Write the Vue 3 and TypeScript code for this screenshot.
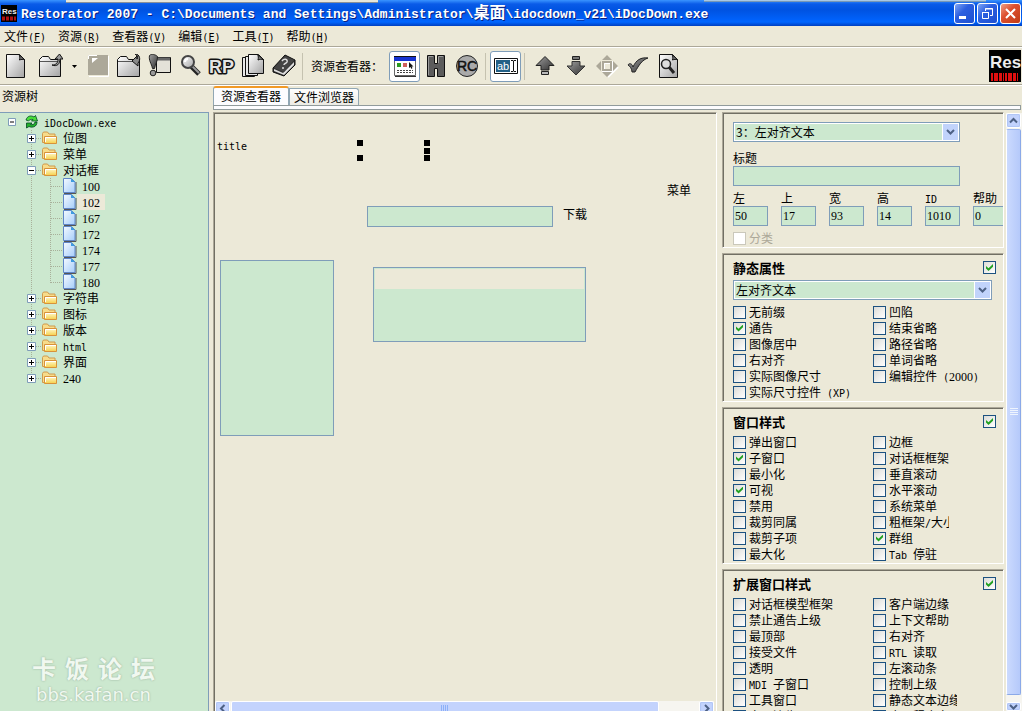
<script setup lang="ts">
import { h, ref, type FunctionalComponent } from 'vue'

/* Splits a label into Latin and CJK runs so that Latin keeps a half-width pitch. */
const Txt: FunctionalComponent<{ t: string }> = (props) =>
  (props.t.match(/[\x20-\x7e]+|[^\x20-\x7e]+/g) ?? []).flatMap((run) =>
    /^[\x20-\x7e]/.test(run)
      ? (run.match(/\d+|\D+/g) ?? []).map((p) => h('span', { class: /\d/.test(p) ? 'num' : 'lat' }, p))
      : [h('span', run)],
  )
Txt.props = ['t']

interface Menu { name: string; key: string }
const menus: Menu[] = [
  { name: '文件', key: 'F' },
  { name: '资源', key: 'R' },
  { name: '查看器', key: 'V' },
  { name: '编辑', key: 'E' },
  { name: '工具', key: 'T' },
  { name: '帮助', key: 'H' },
]

interface Node { label: string; leaf?: boolean; open?: boolean; last?: boolean; selected?: boolean }
const nodes: Node[] = [
  { label: '位图' },
  { label: '菜单' },
  { label: '对话框', open: true },
  { label: '100', leaf: true },
  { label: '102', leaf: true, selected: true },
  { label: '167', leaf: true },
  { label: '172', leaf: true },
  { label: '174', leaf: true },
  { label: '177', leaf: true },
  { label: '180', leaf: true, last: true },
  { label: '字符串' },
  { label: '图标' },
  { label: '版本' },
  { label: 'html' },
  { label: '界面' },
  { label: '240', last: true },
]

interface Field { label: string; value: string }
const fields = ref<Field[]>([
  { label: '左', value: '50' },
  { label: '上', value: '17' },
  { label: '宽', value: '93' },
  { label: '高', value: '14' },
  { label: 'ID', value: '1010' },
  { label: '帮助 ID', value: '0' },
])

interface Option { label: string; on: boolean }
interface Group { title: string; combo?: string; left: Option[]; right: Option[] }
const opts = (names: string[], on: string[] = []): Option[] =>
  names.map((label) => ({ label, on: on.includes(label) }))

const groups = ref<Group[]>([
  {
    title: '静态属性',
    combo: '左对齐文本',
    left: opts(['无前缀', '通告', '图像居中', '右对齐', '实际图像尺寸', '实际尺寸控件 (XP)'], ['通告']),
    right: opts(['凹陷', '结束省略', '路径省略', '单词省略', '编辑控件 (2000)']),
  },
  {
    title: '窗口样式',
    left: opts(['弹出窗口', '子窗口', '最小化', '可视', '禁用', '裁剪同属', '裁剪子项', '最大化'], ['子窗口', '可视']),
    right: opts(['边框', '对话框框架', '垂直滚动', '水平滚动', '系统菜单', '粗框架/大小', '群组', 'Tab 停驻'], ['群组']),
  },
  {
    title: '扩展窗口样式',
    left: opts(['对话框模型框架', '禁止通告上级', '最顶部', '接受文件', '透明', 'MDI 子窗口', '工具窗口', '窗口边缘']),
    right: opts(['客户端边缘', '上下文帮助', '右对齐', 'RTL 读取', '左滚动条', '控制上级', '静态文本边缘', '应用程序窗口']),
  },
])
</script>

<template>
  <div class="window">
    <svg class="defs" width="0" height="0" aria-hidden="true">
      <defs>
        <linearGradient id="metal" x1="0" y1="0" x2="1" y2="1">
          <stop offset="0" stop-color="#ffffff" /><stop offset="1" stop-color="#a4a4a4" />
        </linearGradient>
        <linearGradient id="dark" x1="0" y1="0" x2="1" y2="1">
          <stop offset="0" stop-color="#a0a0a0" /><stop offset="1" stop-color="#303030" />
        </linearGradient>
        <linearGradient id="gold" x1="0" y1="0" x2="0" y2="1">
          <stop offset="0" stop-color="#fffbd0" /><stop offset="1" stop-color="#f6cf4a" />
        </linearGradient>
        <linearGradient id="sheet" x1="0" y1="0" x2="1" y2="1">
          <stop offset="0" stop-color="#f4faff" /><stop offset="1" stop-color="#a6cdfa" />
        </linearGradient>
      </defs>
    </svg>

    <header class="titlebar">
      <svg class="appicon" width="16" height="17" viewBox="0 0 16 17">
        <rect width="16" height="17" fill="#000" />
        <text x="1" y="9" font-family="Liberation Sans" font-weight="bold" font-size="8" fill="#eee">Res</text>
        <path d="M1 13.5h14" stroke="#b01010" stroke-width="4" stroke-dasharray="3 1" />
      </svg>
      <h1>Restorator 2007 - C:\Documents and Settings\Administrator\<span class="cjk">桌面</span>\idocdown_v21\iDocDown.exe</h1>
      <button class="cap" aria-label="Minimize"><svg width="19" height="19"><path d="M4 13.500h7" stroke="#fff" stroke-width="3" /></svg></button>
      <button class="cap" aria-label="Restore">
        <svg width="19" height="19" fill="none" stroke="#fff"><path d="M7.500 7V4.500h7v7H12M7 5h8" /><path d="M4.500 8.500h6v6h-6zM4 8.500h7" /></svg>
      </button>
      <button class="cap close" aria-label="Close"><svg width="19" height="19"><path d="M5 5l9 9M14 5l-9 9" stroke="#fff" stroke-width="2" /></svg></button>
    </header>

    <nav class="menubar">
      <button v-for="m in menus" :key="m.key"><span>{{ m.name }}</span><span class="lat">(<u>{{ m.key }}</u>)</span></button>
    </nav>

    <div class="toolbar">
      <button class="tool first" aria-label="New">
        <svg width="24" height="24"><path d="M2.500.5h13l5 5v18h-18z" fill="url(#metal)" stroke="#111" /><path d="M15 .5c1 2 1 3 .5 5.500 2-.8 3-.8 5-.3z" fill="#777" stroke="#111" /></svg>
      </button>
      <button class="tool" aria-label="Open">
        <svg width="24" height="24"><path d="M.5 22.500v-17l3-3h6l2 3h10v17z" fill="url(#metal)" stroke="#111" /><path d="M1 7.500h20" stroke="#555" /><path d="M13 11c4 0 6-2 6-6h-3l4.500-5L24 5h-3c0 5-3 8-8 6z" fill="#999" stroke="#111" /></svg>
      </button>
      <button class="drop" aria-label="Recent files"><svg width="5" height="3"><path d="M0 0h5L2.500 3z" /></svg></button>
      <button class="tool" aria-label="Save" disabled>
        <svg width="24" height="24"><path d="M3 22.500h19.500V2" fill="none" stroke="#fff" /><path d="M2 1h20v20H2z" fill="#aca899" /><path d="M2.500 5V1.500H11" fill="none" stroke="#fff" /><path d="M6 4h6L6 9z" fill="#fff" /></svg>
      </button>
      <button class="tool" aria-label="Import">
        <svg width="24" height="24"><path d="M.5 22.500v-17l3-3h6l2 3h11v17z" fill="url(#metal)" stroke="#111" /><path d="M1 7.500h21" stroke="#555" /><path d="M18 0c5 0 6 6 3 9v3l-6-5 5-5v3c1-2 0-4-2-5z" fill="#888" stroke="#111" /></svg>
      </button>
      <button class="tool" aria-label="Run">
        <svg width="24" height="24"><path d="M8.500 18.500v-15h14v15z" fill="#e4e2d8" stroke="#111" /><path d="M9 5h13" stroke="#666" stroke-width="3" /><path d="M1.500 1.500c2-2 6-1 8 1 0 5-2 7-3 12h-2c-1-5-4-8-3-13z" fill="url(#dark)" stroke="#222" /><circle cx="5" cy="19" r="2.800" fill="#999" stroke="#222" /></svg>
      </button>
      <button class="tool" aria-label="Search">
        <svg width="24" height="24"><path d="M12 12l8 8" stroke="#222" stroke-width="5" /><path d="M13 12l7 7" stroke="#999" stroke-width="2" /><circle cx="9" cy="8" r="6" fill="url(#metal)" stroke="#444" stroke-width="2" /><path d="M6 8c0-2 1-3 3-3" stroke="#fff" stroke-width="2" fill="none" /></svg>
      </button>
      <button class="tool" aria-label="ResPatcher">
        <svg width="28" height="24"><text x="1" y="19" font-family="Liberation Sans" font-weight="bold" font-size="18" fill="#e4e4e4" stroke="#111" stroke-width="3" stroke-linejoin="round" paint-order="stroke">RP</text></svg>
      </button>
      <button class="tool" aria-label="Copy">
        <svg width="24" height="24"><g fill="#e8e8e8" stroke="#111"><path d="M1.500 3.500h12v19h-12z" /><path d="M4.500 2.500h12v19h-12z" /><path d="M7.500.5h10l5 5v14h-15z" fill="url(#metal)" /></g><path d="M16.500.5c1 2 1 3 .5 5.500 2-.8 3-.8 5.500-.5z" fill="#777" stroke="#111" /></svg>
      </button>
      <button class="tool" aria-label="Help">
        <svg width="24" height="24"><path d="M1 14L13 1l10 5v5L12 22 1 18z" fill="#333" stroke="#111" /><path d="M2 15l9 4L22 8v3L12 21 2 17z" fill="#ddd" /><path d="M2 14L13 2l9 4-10 12z" fill="#444" /><path d="M10 7c2-3 6-2 5 1-1 2-3 1-3 3M11 13v2" stroke="#ddd" stroke-width="1.500" fill="none" /></svg>
      </button>
      <i class="sep" />
      <span class="toollabel">资源查看器：</span>
      <button class="tool on" aria-label="Dialog view" aria-pressed="true">
        <svg width="24" height="24"><path d="M1.500 3.500h21v18h-21z" fill="#fff" stroke="#666" /><path d="M1 5h22" stroke="#1634d0" stroke-width="4" /><path d="M1 2.500h22" stroke="#111" /><path d="M4 9h4v4H4z" fill="#2a9a20" /><path d="M10 9h4v4h-4z" fill="#d0605a" /><path d="M16 8v6l1.500-1 1 2 1-1-1-1.500h2z" fill="#111" /><path d="M4 16.500h16M4 18.500h16" stroke="#444" stroke-dasharray="2 1" /><path d="M2 22.500h21" stroke="#333" /></svg>
      </button>
      <button class="tool" aria-label="Hex view">
        <svg width="24" height="24"><path d="M3.500 1.500h7v8h3v-8h7v21h-7v-8h-3v8h-7z" fill="#5c5c5c" stroke="#111" /><path d="M4.500 21V2.500H9M14.500 9V2.500H19" stroke="#999" fill="none" /></svg>
      </button>
      <button class="tool" aria-label="RC view">
        <svg width="24" height="24"><circle cx="12" cy="12" r="10.500" fill="#aaa" stroke="#222" /><text x="2" y="17" font-family="Liberation Sans" font-size="14" fill="#111" stroke="#111" stroke-width=".5">RC</text></svg>
      </button>
      <i class="sep" />
      <button class="tool on" aria-label="Edit mode" aria-pressed="true">
        <svg width="24" height="24"><path d="M.5 4.500h23v15H.5z" fill="#fff" stroke="#111" /><path d="M2 6h14v12H2z" fill="#236086" /><text x="3" y="16" font-family="Liberation Sans" font-size="11" fill="#fff">ab</text><path d="M17 6.500h2l.5.500.5-.5h2M17 17.500h2l.5-.5.5.5h2M19.500 7v10" stroke="#111" fill="none" /></svg>
      </button>
      <i class="sep" />
      <button class="tool" aria-label="Move up">
        <svg width="24" height="24"><path d="M12 2.500l9 9h-5v4.500H8v-4.500H3z" fill="url(#dark)" stroke="#222" /><path d="M8.500 17.500h7v3h-7z" fill="#bbb" stroke="#222" /></svg>
      </button>
      <button class="tool" aria-label="Move down">
        <svg width="24" height="24"><path d="M12 21l9-9h-5V7.500H8V12H3z" fill="url(#dark)" stroke="#333" /><path d="M8.500 2.500h7v3h-7z" fill="#777" stroke="#222" /></svg>
      </button>
      <button class="tool" aria-label="Arrange" disabled>
        <svg width="24" height="24"><path d="M13 23l10-10" stroke="#fff" stroke-width="2" /><path d="M12 1l5 5H7zM12 23l5-5H7zM1 12l5-5v10zM23 12l-5-5v10z" fill="#aca899" /><path d="M8 8h8v8H8z" fill="#ece9d8" stroke="#aca899" stroke-width="2" /><path d="M9.500 15V9.500H15M17.500 7v10.500H7" fill="none" stroke="#fff" /></svg>
      </button>
      <button class="tool" aria-label="Apply">
        <svg width="24" height="24"><path d="M2 11c1-2 4-2 5 2C10 6 15 3 22 4c-6 2-9 7-13 14H6C6 15 4 12 2 11z" fill="url(#dark)" stroke="#222" /></svg>
      </button>
      <button class="tool" aria-label="Preview">
        <svg width="24" height="24"><path d="M2.500.5h13l5 5v18h-18z" fill="url(#metal)" stroke="#111" /><path d="M15 .5c1 2 1 3 .5 5.500 2-.8 3-.8 5-.3z" fill="#777" stroke="#111" /><path d="M12 13l5 6" stroke="#222" stroke-width="3" /><circle cx="9" cy="10" r="4.500" fill="#ddd" stroke="#222" stroke-width="1.500" /></svg>
      </button>
      <svg class="logo" width="32" height="32">
        <rect width="32" height="32" fill="#000" />
        <text x="1" y="18" font-family="Liberation Sans" font-weight="bold" font-size="17" fill="#eee">Res</text>
        <path d="M2 27h28" stroke="#e01010" stroke-width="8" stroke-dasharray="2 1 4 1 3 1 1 1" />
      </svg>
    </div>

    <main class="body">
      <aside class="side">
        <h2>资源树</h2>
        <div class="tree">
          <ul>
            <li>
              <svg class="guide" width="25" height="16"><path d="M8.500 4.500h7v7h-7z" fill="#fff" stroke="#7f9db9" /><path d="M10 8h4" stroke="#000" /></svg>
              <svg width="15" height="16"><g stroke="#042" stroke-width=".8"><path d="M1 6c1-4 5-5 8-3l1.500-1.500L12.500 7H6.500l1.500-1.500C6 5 4 6 3.500 7z" fill="#4ade3a" /><path d="M12 8c0 5-5 6-8 4.500L1.500 14V9H7l-1.500 1.500c2 .5 4 0 4.500-2.500z" fill="#22b02a" /></g></svg>
              <span class="label root"><Txt t="iDocDown.exe" /></span>
            </li>
            <li v-for="n in nodes" :key="n.label">
              <svg v-if="n.leaf" class="guide" width="62" height="16" fill="none">
                <path d="M31.500 0v16" stroke="#a8b09a" stroke-dasharray="1 1" />
                <path :d="n.last ? 'M50.500 0v9M51 8.500h11' : 'M50.500 0v16M51 8.500h11'" stroke="#a8b09a" stroke-dasharray="1 1" />
              </svg>
              <svg v-else class="guide" width="42" height="16" fill="none">
                <path :d="n.last ? 'M31.500 0v8' : 'M31.500 0v16'" stroke="#a8b09a" stroke-dasharray="1 1" />
                <path d="M36 8.500h6" stroke="#a8b09a" stroke-dasharray="1 1" />
                <path d="M27.500 4.500h8v8h-8z" fill="#fff" stroke="#7f9db9" />
                <path :d="n.open ? 'M29 8.500h5' : 'M29 8.500h5M31.500 6v5'" stroke="#000" />
              </svg>
              <svg v-if="n.leaf" width="15" height="16"><path d="M2 15.500h12V4" fill="none" stroke="#555" /><path d="M1.500.5h8l3.500 3.500v10.500H1.500z" fill="url(#sheet)" stroke="#5f86c8" /><path d="M9 .5V4h4z" fill="#3c9be0" /></svg>
              <svg v-else width="16" height="16"><path d="M.5 12.500V3.500l1-1.500h4l1.500 2h6v9z" fill="#f7dc8a" stroke="#d09a4c" /><path d="M2.500 13.500V6.500h12v7z" fill="url(#gold)" stroke="#d8923a" /><path d="M3.500 12V7.500H14" stroke="#fff" fill="none" /></svg>
              <span class="label" :class="{ selected: n.selected }"><Txt :t="n.label" /></span>
            </li>
          </ul>
          <div class="mark">
            <p class="big"><span>卡</span><span>饭</span><span>论</span><span>坛</span></p>
            <p class="small">bbs.kafan.cn</p>
          </div>
        </div>
      </aside>

      <section class="work">
        <div class="tabs">
          <button class="tab active">资源查看器</button>
          <button class="tab">文件浏览器</button>
        </div>
        <div class="strip" />
        <div class="panes">
          <div class="viewer">
            <div class="canvas">
              <span class="item title"><Txt t="title" /></span>
              <i class="handle h1" /><i class="handle h2" /><i class="handle h3" /><i class="handle h4" /><i class="handle h5" />
              <span class="item menu">菜单</span>
              <input class="item edit" aria-label="编辑框" />
              <span class="item down">下载</span>
              <div class="item list" />
              <div class="item grid"><div class="gridhead" /></div>
            </div>
            <div class="hbar">
              <button class="sb" aria-label="Left"><svg width="9" height="9"><path d="M6.500 1L3 4.500 6.500 8" fill="none" stroke="#4d6185" stroke-width="2" /></svg></button>
              <div class="thumb"><svg width="8" height="8"><path d="M.5 0v8M2.500 0v8M4.500 0v8M6.500 0v8" stroke="#8cb0f8" /></svg></div>
              <div class="track" />
              <button class="sb" aria-label="Right"><svg width="9" height="9"><path d="M3 1l3.500 3.500L3 8" fill="none" stroke="#4d6185" stroke-width="2" /></svg></button>
            </div>
          </div>

          <div class="props">
            <section class="panel">
              <div class="combo short">
                <select aria-label="控件"><option>3：左对齐文本</option></select>
                <span class="arrow"><svg width="9" height="7"><path d="M1 1l3.500 3.500L8 1" fill="none" stroke="#4d6185" stroke-width="2" /></svg></span>
              </div>
              <label class="cap-label" for="caption">标题</label>
              <input id="caption" class="box" />
              <div class="fields">
                <label v-for="f in fields" :key="f.label" class="field"><span class="fname"><Txt :t="f.label" /></span><input v-model="f.value" class="box" /></label>
              </div>
              <label class="check off"><input type="checkbox" disabled /><span>分类</span></label>
            </section>

            <section v-for="(g, i) in groups" :key="g.title" class="panel">
              <div class="head">
                <h3 :id="'group' + i">{{ g.title }}</h3>
                <input type="checkbox" checked :aria-labelledby="'group' + i" />
              </div>
              <div v-if="g.combo" class="combo">
                <select :aria-labelledby="'group' + i"><option>{{ g.combo }}</option></select>
                <span class="arrow"><svg width="9" height="7"><path d="M1 1l3.500 3.500L8 1" fill="none" stroke="#4d6185" stroke-width="2" /></svg></span>
              </div>
              <div class="cols">
                <div><label v-for="o in g.left" :key="o.label" class="check"><input v-model="o.on" type="checkbox" /><span><Txt :t="o.label" /></span></label></div>
                <div><label v-for="o in g.right" :key="o.label" class="check"><input v-model="o.on" type="checkbox" /><span :class="{ clip: o.label === '粗框架/大小', edge: o.label === '静态文本边缘' }"><Txt :t="o.label" /></span></label></div>
              </div>
            </section>
          </div>

          <div class="vbar">
            <button class="sb" aria-label="Up"><svg width="9" height="9"><path d="M1 6.500L4.500 3 8 6.500" fill="none" stroke="#4d6185" stroke-width="2" /></svg></button>
            <div class="thumb"><svg width="8" height="8"><path d="M0 .5h8M0 2.500h8M0 4.500h8M0 6.500h8" stroke="#eef4fe" /></svg></div>
            <div class="track" />
            <button class="sb" aria-label="Down"><svg width="9" height="9"><path d="M1 3l3.500 3.500L8 3" fill="none" stroke="#4d6185" stroke-width="2" /></svg></button>
          </div>
        </div>
      </section>
    </main>
  </div>
</template>

<style>
html, body { margin: 0; overflow: hidden; }
.lat { font-family: "DejaVu Sans Mono", monospace; font-size: 10px; line-height: 1; }
.num { font-family: "Liberation Serif", serif; font-size: 12px; line-height: 1; }
</style>

<style scoped>
.window {
  display: flex;
  flex-direction: column;
  height: 100vh;
  overflow: hidden;
  background: #ece9d8;
  color: #000;
  font: 12px/16px "Noto Sans CJK SC", sans-serif;
  white-space: pre;
}
.defs { position: absolute; }
h1, h2, h3, p, ul { margin: 0; padding: 0; font-size: 12px; font-weight: normal; list-style: none; }
button, input, select { box-sizing: border-box; margin: 0; padding: 0; font: inherit; color: inherit; border-radius: 0; }
button { border: 0; background: none; }
svg { display: block; flex: none; }

.titlebar {
  display: flex;
  align-items: center;
  gap: 2px;
  flex: none;
  box-sizing: border-box;
  height: 26px;
  padding: 0 1px;
  background:
    linear-gradient(#e8e6da 0 2px, #8a8f98 2px 3px) 66px 0 / 312px 3px no-repeat,
    linear-gradient(#bfe0fb, #5f7f9f) 704px 0 / 282px 2px no-repeat,
    linear-gradient(#3a94ff 0, #0a5be8 4px, #0053e1 10px, #0062fb 20px, #0066ff 22px, #003fc0 26px);
}
h1 {
  flex: 1;
  min-width: 0;
  overflow: hidden;
  padding-left: 2px;
  color: #fff;
  font: bold 13px/20px "Liberation Mono", monospace;
  text-shadow: 1px 1px 0 #0a1f80;
}
.cjk { font: bold 16px/20px "Noto Sans CJK SC", sans-serif; }
.cap {
  display: flex;
  flex: none;
  width: 21px;
  height: 21px;
  border: 1px solid #fff;
  border-radius: 3px;
  background: linear-gradient(135deg, #7fa5f5, #2c5fe0 40%, #1d4fd0);
}
.close { background: linear-gradient(135deg, #f0a088, #dd5030 40%, #c03a14); }

.menubar {
  display: flex;
  gap: 12px;
  flex: none;
  height: 20px;
  padding-left: 4px;
  border-bottom: 1px solid #aca899;
  box-shadow: 0 1px 0 #fff;
}
.menubar button { height: 20px; line-height: 18px; }

.toolbar {
  display: flex;
  align-items: center;
  flex: none;
  height: 36px;
  margin-top: 1px;
  border-bottom: 1px solid #aca899;
  box-shadow: 0 1px 0 #fff;
}
.tool { display: flex; align-items: center; justify-content: center; flex: none; width: 31px; height: 31px; }
.first { margin-right: 4px; }
.drop { display: flex; justify-content: center; width: 16px; }
.on { border: 1px solid #7f9db9; border-radius: 3px; background: #fff; }
.sep { flex: none; width: 1px; height: 27px; margin: 0 4px 0 3px; background: #c5c2b0; }
.toollabel { width: 78px; padding-left: 4px; }
.logo { margin-left: auto; margin-right: 1px; }

.body { display: grid; grid-template-columns: 209px minmax(0, 1fr); gap: 4px; flex: 1; min-height: 0; padding-top: 1px; }
.side { display: flex; flex-direction: column; min-height: 0; }
h2 { height: 26px; padding-left: 2px; line-height: 20px; }
.tree {
  display: flex;
  flex-direction: column;
  flex: 1;
  min-height: 0;
  border: 1px solid #7f9db9;
  border-width: 1px 1px 0 0;
  background: #cce8cf;
}
li { display: flex; height: 16px; }
.tree ul { padding-top: 1px; }
.label { padding: 0 5px; line-height: 15px; }
.root { padding-left: 4px; }
.selected { background: #ece9d8; }
.mark { margin-top: auto; padding: 0 0 6px 32px; color: #f0f8f0; text-shadow: 0 0 2px #8fa893; }
.big { display: flex; gap: 9px; font: 24px/28px "Liberation Sans", "Noto Sans CJK SC", sans-serif; font-weight: bold; }
.small { padding-left: 4px; font: 18px/21px "DejaVu Sans", sans-serif; }

.work { display: flex; flex-direction: column; min-width: 0; min-height: 0; }
.tabs { display: flex; align-items: flex-end; height: 19px; }
.tab { height: 17px; padding: 0 4px; border: 1px solid #91a7b4; border-bottom: 0; border-radius: 0 3px 0 0; background: linear-gradient(#fff, #ecebe4); }
.tab.active { height: 19px; padding: 0 7px 2px; border-top: 2px solid #f29a26; border-radius: 3px 3px 0 0; background: #fcfcfe; }
.strip { flex: none; height: 3px; margin: 0 1px 2px 0; border: 1px solid #919b9c; background: #fcfcfe; }
.panes { display: flex; flex: 1; min-height: 0; }

.viewer {
  display: flex;
  flex-direction: column;
  flex: 1;
  min-width: 0;
  margin-right: 5px;
  border: 1px solid #aca899;
  border-right-color: #fff;
  border-bottom: 0;
  box-shadow: inset 1px 1px 0 #716f64;
}
.canvas { position: relative; flex: 1; min-height: 0; overflow: hidden; }
.item { position: absolute; box-sizing: border-box; }
.title { left: 3px; top: 24px; }
.menu { left: 453px; top: 69px; }
.down { left: 349px; top: 93px; }
.edit, .list, .grid { border: 1px solid #7f9db9; background: #cce8cf; }
.edit { left: 153px; top: 93px; width: 186px; height: 21px; }
.list { left: 6px; top: 147px; width: 114px; height: 176px; }
.grid { left: 159px; top: 154px; width: 213px; height: 75px; padding: 1px; }
.gridhead { height: 20px; background: #ece9d8; }
.handle { position: absolute; width: 6px; height: 6px; background: #000; }
.h1 { left: 143px; top: 27px; }
.h2 { left: 143px; top: 42px; }
.h3 { left: 210px; top: 27px; }
.h4 { left: 210px; top: 35px; }
.h5 { left: 210px; top: 42px; }

.hbar { display: flex; gap: 1px; flex: none; height: 10px; margin: 0 2px 0 1px; overflow: hidden; background: #f6f5f0; }
.sb, .thumb { display: flex; align-items: center; justify-content: center; flex: none; box-sizing: border-box; border: 1px solid #fff; border-radius: 2px; background: #c3d3fd; }
.sb { width: 15px; height: 15px; box-shadow: inset 0 0 1px 1px #b0c5f6; }
.hbar .thumb { flex: 430; height: 16px; }
.hbar .track { flex: 38; }
.vbar { display: flex; flex-direction: column; gap: 1px; flex: none; width: 15px; margin: 1px 0 0 2px; padding-right: 1px; background: #f6f5f0; }
.vbar .thumb { flex: 1; border-color: #9db8f0 #8ba9e8 #8ba9e8 #fff; background: linear-gradient(90deg, #cbdafe, #b5c9fa); }
.vbar .track { flex: none; height: 5px; }
.vbar .sb:last-child { height: 9px; }

.props { display: flex; flex-direction: column; gap: 5px; flex: none; width: 282px; overflow: hidden; }
.panel {
  flex: none;
  box-sizing: border-box;
  padding: 9px 0 1px 10px;
  overflow: hidden;
  border: 1px solid #aca899;
  border-right-color: #fff;
  border-bottom-color: #fff;
  box-shadow: inset 1px 1px 0 #716f64;
}
.combo { position: relative; height: 20px; margin-right: 11px; }
.combo.short { margin-right: 43px; }
.combo select { display: block; width: 100%; height: 20px; padding-left: 2px; border: 1px solid #7f9db9; background: #cce8cf; appearance: none; box-shadow: inset 0 0 0 1px #fff; }
.arrow { position: absolute; top: 2px; right: 2px; display: flex; align-items: center; justify-content: center; width: 15px; height: 16px; border-left: 1px solid #fff; background: #c1d3fb; pointer-events: none; }
.cap-label { display: block; margin-top: 8px; }
.box { display: block; height: 20px; border: 1px solid #7f9db9; background: #cce8cf; }
#caption { width: 227px; }
.fields { display: flex; gap: 13px; margin-top: 4px; }
.field { flex: none; width: 35px; }
.fname { display: block; height: 16px; }
.field .box { width: 35px; padding-left: 1px; font: 12px/16px "Liberation Serif", serif; }
.check { display: flex; align-items: center; gap: 3px; height: 16px; }
.off { margin-top: 4px; color: #aca899; }
input[type="checkbox"] {
  display: grid;
  place-content: center;
  flex: none;
  width: 13px;
  height: 13px;
  border: 1px solid #1c5180;
  background: linear-gradient(135deg, #dcdcd7, #fff);
  appearance: none;
}
input[type="checkbox"]:checked::before {
  content: "";
  width: 7px;
  height: 7px;
  background: #21a121;
  clip-path: polygon(0 28%, 36% 62%, 100% 0, 100% 40%, 36% 100%, 0 66%);
}
input[type="checkbox"]:disabled { border-color: #cac8bb; background: #fff; }
.head { display: flex; align-items: center; justify-content: space-between; height: 13px; margin: -2px 7px 6px 0; }
h3 { font-weight: bold; font-size: 13px; line-height: 13px; }
.cols { display: grid; grid-template-columns: 140px minmax(0, 1fr); margin-top: 5px; }
.combo + .cols { margin-top: 4px; }
.clip { width: 60px; overflow: hidden; }
.edge { width: 68px; overflow: hidden; }
</style>
